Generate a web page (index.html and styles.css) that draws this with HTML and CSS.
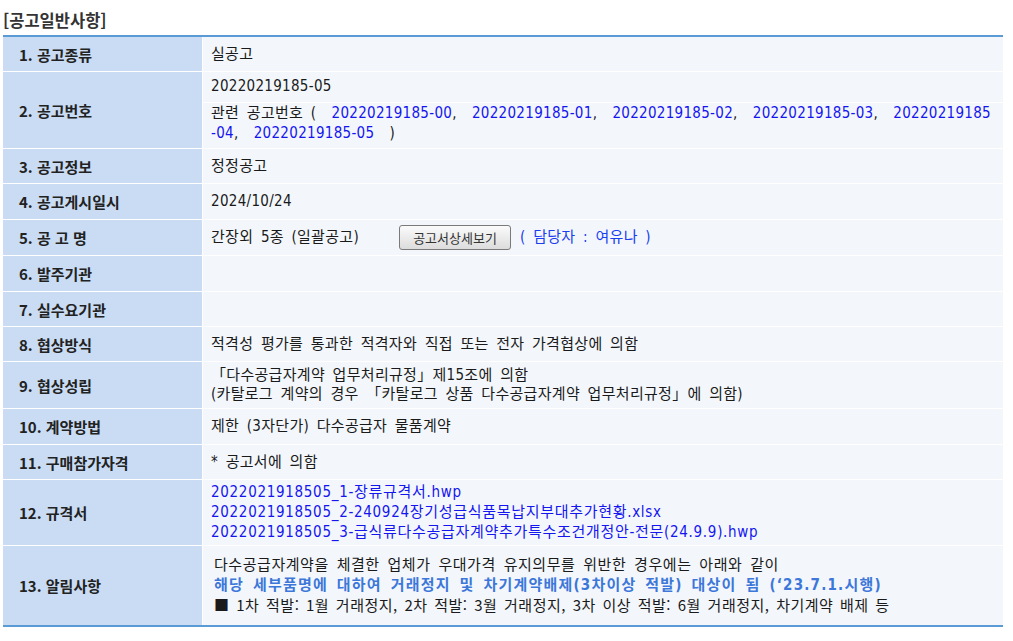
FILE: index.html
```html
<!DOCTYPE html>
<html lang="ko">
<head>
  <meta charset="UTF-8" />
  <title>공고일반사항</title>
  <link rel="stylesheet" href="styles.css">
</head>
<body>
  <h3 class="sec-title">[공고일반사항]</h3>
  <table class="info">
    <tr class="r35">
      <th>1. 공고종류</th>
      <td>실공고</td>
    </tr>
    <tr>
      <th>2. 공고번호</th>
      <td class="nested">
        <div class="sub first">20220219185-05</div>
        <div class="sub">관련 공고번호 ( &nbsp;<a href="#">20220219185-00</a>, &nbsp;<a href="#">20220219185-01</a>, &nbsp;<a href="#">20220219185-02</a>, &nbsp;<a href="#">20220219185-03</a>, &nbsp;<a href="#">20220219185<wbr>-04</a>, &nbsp;<a href="#">20220219185-05</a> &nbsp;)</div>
      </td>
    </tr>
    <tr class="r35">
      <th>3. 공고정보</th>
      <td>정정공고</td>
    </tr>
    <tr>
      <th>4. 공고게시일시</th>
      <td>2024/10/24</td>
    </tr>
    <tr>
      <th>5. 공 고 명</th>
      <td>간장외 5종 (일괄공고)<button class="doc-btn">공고서상세보기</button><span class="contact">( 담당자 : 여유나 )</span></td>
    </tr>
    <tr>
      <th>6. 발주기관</th>
      <td></td>
    </tr>
    <tr class="r35">
      <th>7. 실수요기관</th>
      <td></td>
    </tr>
    <tr class="r35">
      <th>8. 협상방식</th>
      <td>적격성 평가를 통과한 적격자와 직접 또는 전자 가격협상에 의함</td>
    </tr>
    <tr>
      <th>9. 협상성립</th>
      <td class="multi">「다수공급자계약 업무처리규정」제15조에 의함<br>(카탈로그 계약의 경우 「카탈로그 상품 다수공급자계약 업무처리규정」에 의함)</td>
    </tr>
    <tr>
      <th>10. 계약방법</th>
      <td>제한 (3자단가) 다수공급자 물품계약</td>
    </tr>
    <tr class="r35">
      <th>11. 구매참가자격</th>
      <td>* 공고서에 의함</td>
    </tr>
    <tr>
      <th>12. 규격서</th>
      <td class="files">
        <a href="#">2022021918505_1-장류규격서.hwp</a><br>
        <a href="#">2022021918505_2-240924장기성급식품목납지부대추가현황.xlsx</a><br>
        <a href="#">2022021918505_3-급식류다수공급자계약추가특수조건개정안-전문(24.9.9).hwp</a>
      </td>
    </tr>
    <tr>
      <th>13. 알림사항</th>
      <td class="notice">
        <p>다수공급자계약을 체결한 업체가 우대가격 유지의무를 위반한 경우에는 아래와 같이</p>
        <p class="warn">해당 세부품명에 대하여 거래정지 및 차기계약배제(3차이상 적발) 대상이 됨 (‘23.7.1.시행)</p>
        <p class="rule">■ 1차 적발: 1월 거래정지, 2차 적발: 3월 거래정지, 3차 이상 적발: 6월 거래정지, 차기계약 배제 등</p>
      </td>
    </tr>
  </table>
</body>
</html>
```
FILE: styles.css
```css
body {
  margin: 0;
  padding: 0 0 0 3px;
  background: #fff;
  font-family: "DejaVu Sans Condensed", "Noto Sans CJK KR", sans-serif;
  font-size: 15px;
  color: #1a1a1a;
}
.sec-title {
  margin: 0;
  padding: 9px 0 4px;
  font-family: "Noto Sans CJK KR", sans-serif;
  font-size: 16.5px;
  line-height: 22px;
  font-weight: bold;
  color: #333;
}
.info {
  width: 1000px;
  border-collapse: collapse;
  border-top: 2px solid #5b9bd5;
  border-bottom: 2px solid #5b9bd5;
}
.info th {
  width: 183px;
  padding: 0 0 0 16px;
  background: #c9dcf4;
  border-bottom: 1px solid #fff;
  border-right: 1px solid #fff;
  text-align: left;
  font-family: "Noto Sans CJK KR", sans-serif;
  font-size: 15px;
  font-weight: bold;
  color: #222;
  height: 35px;
}
.info td {
  padding: 0 8px;
  background: #f3f7fc;
  border-bottom: 1px solid #fff;
  height: 35px;
  line-height: 19px;
  letter-spacing: 0.3px;
  word-spacing: 3px;
}
.info .r35 th,
.info .r35 td { height: 34px; }
.info tr:last-child th,
.info tr:last-child td { border-bottom: none; }
.info a {
  color: #1515f0;
  text-decoration: none;
}
.nested { padding: 0 !important; }
.sub {
  padding: 0 8px 5px;
  line-height: 20px;
}
.sub.first {
  border-bottom: 1px solid #fff;
  padding: 4px 8px 6px;
}
.info .multi { padding: 4px 8px; }
.info .files {
  padding: 2px 8px 3px;
  line-height: 20px;
  letter-spacing: 0.7px;
}
.doc-btn {
  width: 112px;
  height: 25px;
  margin: 0 9px 0 40px;
  padding: 0;
  font-family: "Noto Sans CJK KR", sans-serif;
  font-size: 13px;
  letter-spacing: 0;
  color: #333;
  background: linear-gradient(#fbfbfb, #dcdcdc);
  border: 1px solid #7a7a7a;
  border-radius: 3px;
  vertical-align: middle;
}
.contact { color: #1a3ef0; }
.info .notice {
  padding: 9px 8px 10px 11px;
  letter-spacing: 0.55px;
}
.notice p {
  margin: 0;
  line-height: 20px;
}
.notice .warn {
  color: #3d77d9;
  font-weight: bold;
  letter-spacing: 1.2px;
}
.notice .rule {
  font-family: "Noto Sans CJK KR", sans-serif;
  letter-spacing: 0.5px;
  word-spacing: 2px;
}
```
